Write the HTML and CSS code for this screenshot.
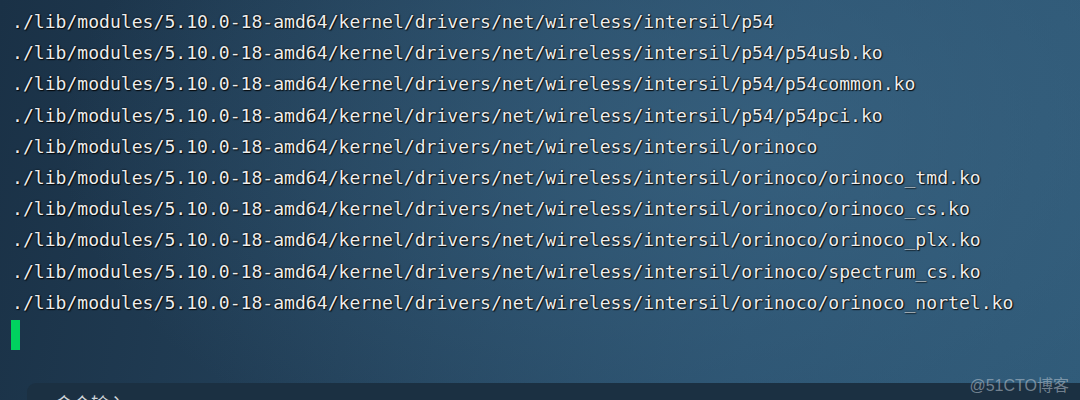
FILE: index.html
```html
<!DOCTYPE html>
<html>
<head>
<meta charset="utf-8">
<link rel="stylesheet" href="styles.css">
</head>
<body>
<div class="term">
  <div class="line">./lib/modules/5.10.0-18-amd64/kernel/drivers/net/wireless/intersil/p54</div>
  <div class="line">./lib/modules/5.10.0-18-amd64/kernel/drivers/net/wireless/intersil/p54/p54usb.ko</div>
  <div class="line">./lib/modules/5.10.0-18-amd64/kernel/drivers/net/wireless/intersil/p54/p54common.ko</div>
  <div class="line">./lib/modules/5.10.0-18-amd64/kernel/drivers/net/wireless/intersil/p54/p54pci.ko</div>
  <div class="line">./lib/modules/5.10.0-18-amd64/kernel/drivers/net/wireless/intersil/orinoco</div>
  <div class="line">./lib/modules/5.10.0-18-amd64/kernel/drivers/net/wireless/intersil/orinoco/orinoco_tmd.ko</div>
  <div class="line">./lib/modules/5.10.0-18-amd64/kernel/drivers/net/wireless/intersil/orinoco/orinoco_cs.ko</div>
  <div class="line">./lib/modules/5.10.0-18-amd64/kernel/drivers/net/wireless/intersil/orinoco/orinoco_plx.ko</div>
  <div class="line">./lib/modules/5.10.0-18-amd64/kernel/drivers/net/wireless/intersil/orinoco/spectrum_cs.ko</div>
  <div class="line">./lib/modules/5.10.0-18-amd64/kernel/drivers/net/wireless/intersil/orinoco/orinoco_nortel.ko</div>
  <div class="cursor"></div>
  <div class="inputbar"><span class="placeholder">命令输入</span></div>
</div>
<div class="watermark">@51CTO博客</div>
</body>
</html>
```

FILE: styles.css
```css
html, body {
  margin: 0;
  padding: 0;
  width: 1080px;
  height: 400px;
  overflow: hidden;
}
body {
  background:
    radial-gradient(ellipse 700px 380px at 760px 140px, rgba(58, 100, 130, 0.7), rgba(58, 100, 130, 0) 100%),
    linear-gradient(100deg, #1a3146 0%, #23415a 35%, #2b5270 70%, #2f5a78 100%);
  font-family: "DejaVu Sans Mono", "Liberation Mono", monospace;
  position: relative;
}
.term {
  padding: 6px 0 0 12px;
}
.line {
  font-size: 18.08px;
  line-height: 31.2px;
  height: 31.2px;
  color: #ededed;
  white-space: pre;
  text-shadow: 0 0 2px #000, 1px 1px 1px rgba(0,0,0,0.8);
}
.cursor {
  width: 9px;
  height: 30px;
  margin: 2px 0 0 -1px;
  background: #00d25f;
}
.inputbar {
  margin: 33px 0 0 15px;
  height: 17px;
  overflow: hidden;
  background: #1b3042;
  border-radius: 9px 0 0 0;
  padding: 8px 0 0 28px;
  box-sizing: border-box;
  line-height: 24px;
}
.placeholder {
  font-family: "Noto Sans CJK SC", sans-serif;
  font-size: 18px;
  color: #d0d6da;
}
.watermark {
  position: absolute;
  right: 11px;
  top: 372px;
  font-family: "Liberation Sans", "Noto Sans CJK SC", sans-serif;
  font-size: 16px;
  color: rgba(190, 200, 210, 0.55);
}
```
